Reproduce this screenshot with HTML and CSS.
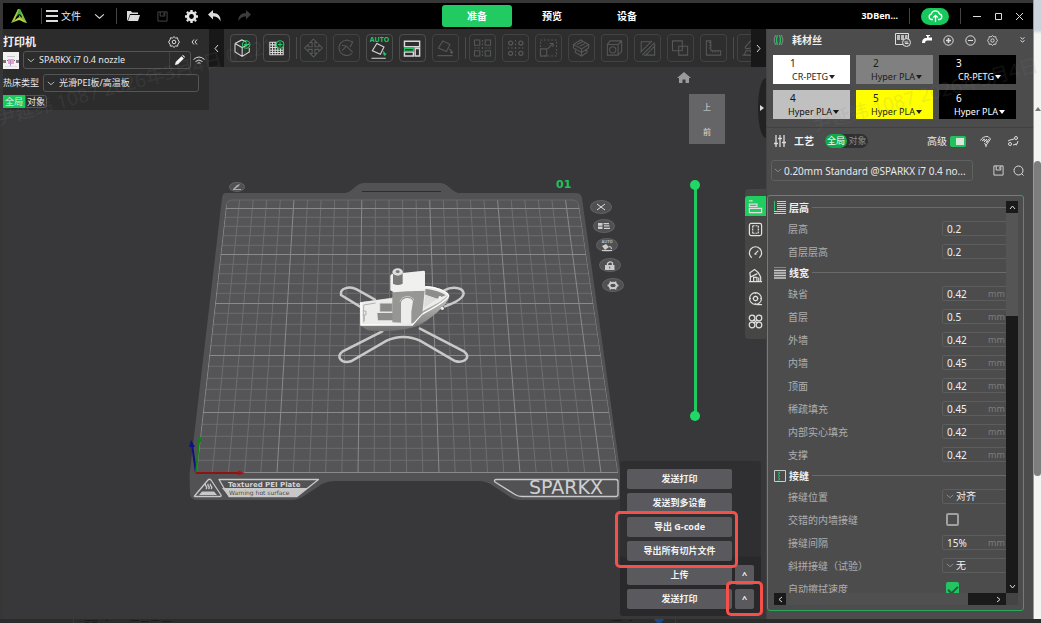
FILE: index.html
```html
<!DOCTYPE html>
<html lang="zh-CN">
<head>
<meta charset="utf-8">
<title>3DBenchy</title>
<link rel="stylesheet" href="styles.css">
</head>
<body>
<svg class="defs" width="0" height="0" aria-hidden="true">
  <symbol id="i-gear" viewBox="0 0 12 12"><path d="M6 .6 7.500 2l2-.2.500 2L11.400 6 10 8.200l-.5 2-2-.2L6 11.400 4.500 10l-2 .2-.5-2L.6 6 2 3.800l.5-2 2 .2z"/><circle cx="6" cy="6" r="1.800"/></symbol>
  <symbol id="i-chev" viewBox="0 0 10 6"><path d="M1 1l4 3.500L9 1"/></symbol>
  <symbol id="i-save" viewBox="0 0 12 12"><path d="M1 1h10v10H1zM3.500 1v4.500h5V1M7 2.500v1.500"/></symbol>
</svg>
<div class="desktop">
<div class="window">
  <header class="titlebar">
    <div class="title-left">
      <svg class="logo" viewBox="0 0 16 15"><path fill="#3fae49" d="M7 0h2l4 8-5-3-5 5z"/><path fill="#a4c93a" d="M0 14 7 0h1L4 11l4-3z"/><path fill="#7fbf3d" d="M9 0l7 14-4-1-4-5V6l3 3z"/><path fill="#c3d63c" d="M0 14l8-6 8 6-8-3z"/></svg>
      <i class="sep"></i>
      <button class="file-menu"><svg width="13" height="12" viewBox="0 0 13 12" class="ln"><path d="M0 1h12M0 6h12M0 11h12"/></svg>文件</button>
      <button class="chev-btn" aria-label="更多"><svg width="11" height="7" class="ln"><use href="#i-chev"/></svg></button>
      <i class="sep sep-b"></i>
      <button class="tb open" aria-label="打开"><svg width="13" height="12" viewBox="0 0 13 12"><path fill="#dcdcdc" d="M0 11V1h4l1 1.500h6V4H3L1 9.500zM3.200 5H13l-2 6H1z"/></svg></button>
      <button class="tb save dim" aria-label="保存"><svg width="11" height="11" class="ln"><use href="#i-save"/></svg></button>
      <button class="tb prefs" aria-label="设置"><svg width="13" height="13" viewBox="0 0 13 13"><circle cx="6.500" cy="6.500" r="3.700" fill="none" stroke="#e6e6e6" stroke-width="2.600"/><path stroke="#e6e6e6" stroke-width="2.400" d="M6.500 0v2M6.500 11v2M0 6.500h2M11 6.500h2M1.900 1.900l1.300 1.300M9.800 9.800l1.300 1.300M1.900 11.100l1.300-1.300M9.800 3.200l1.300-1.300"/></svg></button>
      <button class="tb undo" aria-label="撤销"><svg width="13" height="12" viewBox="0 0 13 12"><path fill="#dcdcdc" d="M0 4.500 5 0v3c5 0 8 3 7.500 8.500C11 8 9 6.500 5 6.500v3z"/></svg></button>
      <button class="tb redo" aria-label="重做"><svg width="13" height="12" viewBox="0 0 13 12"><path fill="#3c3c3c" d="M13 4.500 8 0v3C3 3 0 6 .5 11.500 2 8 4 6.500 8 6.500v3z"/></svg></button>
    </div>
    <nav class="tabs"><button class="tab on">准备</button><button class="tab">预览</button><button class="tab">设备</button></nav>
    <div class="title-right">
      <span class="project">3DBen...</span><i class="sep"></i>
      <button class="cloud" aria-label="上传"><svg width="15" height="12" viewBox="0 0 15 12" fill="none" stroke="#fff" stroke-width="1.300"><path d="M5 9.500H3.500a2.700 2.700 0 0 1-.3-5.300A4.300 4.300 0 0 1 11.500 4a2.800 2.800 0 0 1 0 5.500H10M7.500 12V5.500M5.300 7.500l2.200-2.200 2.200 2.200"/></svg></button>
      <i class="sep"></i>
      <button class="wb" aria-label="最小化"><svg width="9" height="9" class="ln"><path d="M0 4.500h8"/></svg></button>
      <button class="wb" aria-label="最大化"><svg width="9" height="9" class="ln"><path d="M1.500 1.500h6v6h-6z"/></svg></button>
      <button class="wb" aria-label="关闭"><svg width="9" height="9" class="ln"><path d="M1 1l7 7M8 1L1 8"/></svg></button>
    </div>
  </header>

  <div class="body">
    <main class="viewport">
      <svg class="scene" viewBox="3 29 763 590" preserveAspectRatio="xMinYMin slice" aria-hidden="true">
        <defs>
          <clipPath id="bed"><path d="M232 200H573Q578 200 579 206L618 473H196L226 206Q227 200 232 200z"/></clipPath>
          <linearGradient id="hull" x1="0" y1="0" x2="0" y2="1"><stop offset=".3" stop-color="#bdbdbb"/><stop offset=".75" stop-color="#8f8f8d"/><stop offset="1" stop-color="#6d6d6b"/></linearGradient>
        </defs>
        <path fill="#525255" d="M226 193H346Q350 192 354 188 359 183 364 183H440Q445 183 450 188 454 192 458 193H576Q581 193 582 198L621.500 480V494Q621 500 615 500H519Q514 500 510 497L492 485Q486 481 478 481H336Q328 481 322 484L304 496Q298 500 292 500H197Q190 500 190 493L189.500 475 222 198Q222.500 193 226 193z"/>
        <path stroke="#2d2d2f" d="M362 191.500H441"/>
        <path fill="#555558" d="M232 200H573Q578 200 579 206L618 473H196L226 206Q227 200 232 200z"/>
        <g clip-path="url(#bed)" fill="none">
          <path stroke="#6f6f72" d="M239.600 200L212.200 473M253.200 200L228.400 473M266.700 200L244.600 473M280.300 200L260.800 473M307.500 200L293.200 473M321.100 200L309.400 473M334.600 200L325.600 473M348.200 200L341.800 473M375.400 200L374.200 473M389 200L390.400 473M402.500 200L406.600 473M416.100 200L422.800 473M443.300 200L455.200 473M456.900 200L471.400 473M470.400 200L487.600 473M484 200L503.800 473M511.200 200L536.200 473M524.800 200L552.400 473M538.300 200L568.600 473M551.900 200L584.800 473"/>
          <path stroke="#6c6c6f" d="M190 217.300H620M190 226.300H620M190 235.700H620M190 245.300H620M190 264.300H620M190 273.700H620M190 283.700H620M190 293.300H620M190 313.300H620M190 324.300H620M190 334.300H620M190 345.700H620M190 366.300H620M190 378.300H620M190 389.300H620M190 400.300H620M190 424.300H620M190 436.300H620M190 448.300H620M190 460.300H620"/>
          <path stroke="#8a8a8c" d="M293.900 200L277 473M361.800 200L358 473M429.700 200L439 473M497.600 200L520 473M565.500 200L601 473M190 208.500H620M190 254.500H620M190 303.500H620M190 355.500H620M190 412.500H620M190 472.500H620M226.500 204L196.500 473M579 206L618 473"/>
        </g>
        <path fill="none" stroke="#68686b" d="M226 206Q227 200 232 200H573Q578 200 579 206"/>
        <g transform="translate(325 255) scale(.3333)">
          <g fill="none" stroke="#c9c9c8" stroke-width="7.500" stroke-linecap="round">
            <path d="M172 229L52 290C32 304 48 327 78 319L185 257C215 242 255 242 285 257L390 318C418 327 440 306 418 290L285 221M150 134L95 103C75 93 44 98 48 120L110 158M358 106C380 94 414 96 416 115 416 130 385 145 360 154"/>
          </g>
          <path fill="url(#hull)" d="M105 142L200 128 300 93C330 94 368 106 373 122 372 142 335 178 292 205 262 226 180 233 128 226L107 212z"/>
          <path fill="#ececeb" d="M105 142L200 130 300 94C330 96 362 106 369 121L345 140 290 170 262 208 107 211z"/>
          <path fill="#8d8d8b" d="M301 102C325 104 352 112 362 121L336 131 301 119z"/>
          <path fill="#dededd" d="M301 119L336 131 296 160z"/>
          <path fill="none" stroke="#fff" stroke-width="4" d="M301 95C330 96 365 107 371 122 369 133 340 152 290 178L262 210H108V143"/>
          <path fill="none" stroke="#b2b2b0" stroke-width="3" d="M116 202V150L152 144M113 168h10v12h-10M118 180v18"/>
          <path fill="#898988" stroke="#c4c4c2" stroke-width="2" d="M165 145h37v25h-37z"/>
          <path fill="#8c8c8a" d="M157 174h48v22h-46z"/>
          <path fill="#969694" d="M202 110L299 107 292 175 264 205 202 202z"/>
          <path fill="#ededec" d="M228 203V143C232 125 260 125 264 139L259 170V206z"/>
          <path fill="none" stroke="#c6c6c4" stroke-width="3" d="M225 140C230 120 262 120 267 136"/>
          <path fill="#f0f0ee" d="M196 62Q197 58 202 57L296 47Q300 47 300 51V106L206 112 196 106z"/>
          <path fill="#787876" d="M204 52V86Q218 94 233 86V52z"/>
          <ellipse cx="218" cy="51" rx="16" ry="11" fill="#ddd"/><ellipse cx="218" cy="50" rx="6" ry="4" fill="#777"/>
          <circle cx="345" cy="127" r="4" fill="#eee"/><circle cx="352" cy="160" r="5" fill="#eee"/>
        </g>
        <g fill="none" stroke="#c8c8c8" stroke-width="1.300" stroke-linejoin="round">
          <path d="M194.500 496L208 480Q209.500 478.500 211 480L221 495Q221.500 496.500 220 496.500H195.500Q194 496.500 194.500 496z"/>
          <path d="M219 479.500H318.500L297 496.500H229z"/>
          <path d="M496 479.500H616Q618 479.500 618 482V494Q618 496.500 616 496.500H522Q518 496.500 515 494.500L495 482Q493.500 480 496 479.500z"/>
          <path d="M206 489q1.500-1.500 0-3t0-2M208.500 489q1.500-1.500 0-3t0-2M211 489q1.500-1.500 0-3t0-2"/>
        </g>
        <path fill="#c8c8c8" d="M202 491.500h12l3 3.500h-18zM222 488H308L297 496.500H229z"/>
        <text x="228" y="487" class="plate-name">Textured PEI Plate</text>
        <text x="229" y="495" class="plate-note">Warning hot surface</text>
        <text x="566" y="494" class="plate-brand">SPARKX</text>
        <text x="556" y="188" class="plate-no">01</text>
        <g stroke-width="2"><path stroke="#12127c" d="M196 473L192 444"/><path stroke="#118018" d="M196 473L199 440"/><path stroke="#8e1414" d="M196 473H240"/></g>
        <path fill="#12127c" d="M191 440l4 7h-6z"/><path fill="#118018" d="M200 435l2 7h-5z"/><path fill="#a01616" d="M245 473l-7-2.500v5z"/>
      </svg>

      <div class="toolbar">
        <button class="pg" aria-label="上一页"><svg width="5" height="9" class="ln"><path d="M4 1L1 4.500 4 8"/></svg></button>
        <div class="tools">
          <button class="tool" aria-label="添加模型"><svg viewBox="0 0 28 28"><path d="M4.500 9L12 5l5 2M4.500 9l8 4.500L20 9.500M4.500 9v9.500l8 5 8-5V14M12.500 13.500v10"/><g class="g"><circle cx="17" cy="10" r="4.200"/><path d="M14.500 10h5M17 7.500v5"/></g></svg></button>
          <button class="tool" aria-label="添加盘"><svg viewBox="0 0 28 28"><path d="M6.500 7.500h15v14h-15zM9.500 7v14M12.500 7v14M15.500 7v14M18.500 7v14M6.500 10.500h15M6.500 13.500h15M6.500 16.500h15M6.500 19h15"/><g class="g"><circle cx="18" cy="10" r="4.200" fill="#2e2f2e"/><path d="M15.500 10h5M18 7.500v5"/></g></svg></button>
          <i class="tsep"></i>
          <button class="tool off" aria-label="移动"><svg viewBox="0 0 28 28"><path d="M14 4l4 4h-2.500v4.500H20V10l4 4-4 4v-2.500h-4.500V20H18l-4 4-4-4h2.500v-4.500H8V18l-4-4 4-4v2.500h4.500V8H10z"/></svg></button>
          <button class="tool off" aria-label="旋转"><svg viewBox="0 0 28 28"><path d="M20 20A8.500 8.500 0 1 1 16 5.500M14 5l7 2-3 6M9 17l5-5 7 7M14 12l-5-1"/></svg></button>
          <button class="tool" aria-label="自动朝向"><b>AUTO</b><svg viewBox="0 0 28 28"><path d="M11 9l8 4-4 8-9-4zM5 25.500h16"/><path class="g" d="M18 18q2 1 2 4M18 20l2 2 1.500-2"/></svg></button>
          <button class="tool" aria-label="整理"><svg viewBox="0 0 28 28"><path stroke-width="1.600" d="M5 6.500h17v6H5zM5 18.500h10V23H5zM17 14.500h5V23h-5z"/><path class="g" d="M5 14.500h10v3H5z"/></svg></button>
          <button class="tool off" aria-label="放平"><svg viewBox="0 0 28 28"><path d="M11 6l8 4-4 8-9-4zM5 22.500h17M18 15q3 1 3 4M19 18l2 2 1.500-2"/></svg></button>
          <i class="tsep"></i>
          <button class="tool off" aria-label="拆分对象"><svg viewBox="0 0 28 28"><path d="M5 5h6v6H5zM17 5h6v6h-6zM5 17h6v6H5zM17 17h6v6h-6z"/><path stroke-dasharray="2 2" d="M14 5v19M5 14h19"/></svg></button>
          <button class="tool off" aria-label="拆分零件"><svg viewBox="0 0 28 28"><g stroke-width="1.400"><circle cx="8.500" cy="8.500" r="2.300"/><circle cx="20" cy="8.500" r="2.300"/><circle cx="8.500" cy="20" r="2.300"/><circle cx="20" cy="20" r="2.300"/></g><path stroke-dasharray="2 2" d="M14 5v19M5 14h19"/></svg></button>
          <button class="tool off" aria-label="缩放"><svg viewBox="0 0 28 28"><path d="M5 15h7v8H5zM13 15l6-6M15 9h4v4"/><path stroke-dasharray="2 2" d="M5 5h18v18H5z"/></svg></button>
          <button class="tool off" aria-label="分层"><svg viewBox="0 0 28 28"><path d="M5 10l8-5 9 5-8 5zM5 10v4l9 5 8-5v-4M7 16v3l7 4 6-4v-3M9 10l6-3M12 12l6-3M14 15v8"/></svg></button>
          <button class="tool off" aria-label="孔洞"><svg viewBox="0 0 28 28"><path d="M6 10h12v12H6zM6 10l3-4h13v12l-4 4M18 10l4-4"/><circle cx="12" cy="16" r="3.500"/></svg></button>
          <button class="tool off" aria-label="切割"><svg viewBox="0 0 28 28"><path d="M7 19V7h12M10 22h12V9M6 19L19 6M8 22L22 8M12 22L22 12"/></svg></button>
          <button class="tool off" aria-label="布尔运算"><svg viewBox="0 0 28 28"><path d="M5 6h11v11H5zM12 12h10v10H12z"/></svg></button>
          <button class="tool off" aria-label="测量"><svg viewBox="0 0 28 28"><path d="M6 6h5v11h11v5H6zM9 8h2M9 11h2M9 14h2M13 19v-2M16 19v-2M19 19v-2"/></svg></button>
          <i class="tsep"></i>
          <button class="tool off" aria-label="支撑"><svg viewBox="0 0 28 28"><path d="M5 22h16M7 22l2-5h5l2 5M8 13l6-7 5 3-4 5-6 1z"/></svg></button>
        </div>
        <button class="pg" aria-label="下一页"><svg width="5" height="9" class="ln"><path d="M1 1l3 3.500L1 8"/></svg></button>
      </div>

      <section class="printer">
        <div class="p-head"><h2>打印机</h2><button aria-label="打印机设置"><svg width="12" height="12" class="ln"><use href="#i-gear"/></svg></button><button aria-label="收起"><svg width="7" height="6" class="ln"><path d="M3 .5L1 3l2 2.500M6 .5L4 3l2 2.500"/></svg></button></div>
        <div class="p-row">
          <svg class="thumb" viewBox="0 0 16 17"><path fill="#f4f1f2" d="M0 0h16v17H0z"/><path fill="#c9c9cc" d="M4 4h8v1H4z"/><path fill="#77727c" d="M0 8h3v3H0zM13 8h3v3h-3zM4 8h2v1H4zM10 8h2v1h-2z"/><path fill="#ef9fc0" d="M5 7h6v5H5z"/><path fill="#b58ad8" d="M7 8h1v6H7z"/><path fill="#ddd" d="M2 14h12v1H2z"/></svg>
          <div class="combo"><svg class="cv ln"><use href="#i-chev"/></svg><select aria-label="打印机型号"><option>SPARKX i7 0.4 nozzle</option></select><button class="edit" aria-label="编辑"><svg width="10" height="10" viewBox="0 0 10 10"><path fill="#fff" d="M0 10l.7-3L6.500 1.200l2.300 2.300L3 9.300zM7.200.5l.8-.5L10 2l-.5.800z"/></svg></button></div>
          <button class="wifi" aria-label="网络"><svg width="12" height="9" viewBox="0 0 12 9" class="ln"><path d="M.5 3.500q5.500-5 11 0M2.500 5.500q3.500-3 7 0M4.500 7.300q1.500-1.200 3 0"/></svg></button>
        </div>
        <div class="p-row"><label for="bedtype">热床类型</label><div class="combo"><svg class="cv ln"><use href="#i-chev"/></svg><select id="bedtype"><option>光滑PEI板/高温板</option></select></div></div>
        <div class="scope"><button class="on">全局</button><button>对象</button></div>
      </section>

      <button class="home" aria-label="主视图"><svg width="14" height="11" viewBox="0 0 14 11"><path fill="#9a9a9b" d="M7 0l7 6h-2v5H8.500V7.500h-3V11H2V6H0z"/></svg></button>
      <div class="cube"><span>上</span><span>前</span></div>
      <button class="expander" aria-label="展开"><svg width="4" height="6"><path fill="#ddd" d="M0 0l4 3-4 3z"/></svg></button>
      <div class="layers"><i></i><i></i></div>

      <button class="pb rename" aria-label="重命名"><svg width="8" height="6" viewBox="0 0 8 6"><path fill="#aaa" d="M0 5l4-4 3-1-1 2-4 3h6v1H0z"/></svg></button>
      <button class="pb p1" aria-label="删除盘"><svg width="10" height="8" class="ln"><path d="M1 1l8 6M9 1L1 7"/></svg></button>
      <button class="pb p2" aria-label="排列盘"><svg width="12" height="8" viewBox="0 0 12 8"><path fill="#ccc" d="M0 1h4.500v2.700H0zM0 4.500h4.500V7H0zM5.500 1H11v1.300H5.500zM6 3.300h5.500v1.300H6zM6 5.700h6V7H6z"/></svg></button>
      <button class="pb p3" aria-label="自动朝向盘"><b>AUTO</b><svg width="12" height="7" viewBox="0 0 12 7"><path fill="#ccc" d="M1 2l4-2 3 3-4 3zM1 6h10v1H1zM8 2q3 0 3 3h-1q0-2-2-2z"/></svg></button>
      <button class="pb p4" aria-label="锁定盘"><svg width="10" height="9" viewBox="0 0 10 9"><path fill="#ccc" d="M0 4h9.500v5H0z"/><path fill="none" stroke="#ccc" stroke-width="1.300" d="M2.500 4V2.500Q5-.5 7.500 2v2"/><path fill="#555" d="M4.200 5.500h1v2h-1z"/></svg></button>
      <button class="pb p5" aria-label="盘设置"><svg width="12" height="9" viewBox="0 0 12 9"><ellipse cx="6" cy="4.500" rx="3.700" ry="2.800" fill="none" stroke="#ccc" stroke-width="2"/><path stroke="#ccc" stroke-width="1.500" d="M.5 4.500h2M9.500 4.500h2M3 .5l1 2M9 .5l-1 2M3 8.500l1-2M9 8.500l-1-2"/></svg></button>

      <nav class="side" aria-label="参数分类">
        <button class="on" aria-label="质量"><svg viewBox="0 0 16 16"><path d="M1.500 10h13v4.500h-13zM1.500 5.500h8V8h-8z"/><path d="M1 2h4"/></svg></button>
        <button aria-label="强度"><svg viewBox="0 0 16 16"><rect x="1.500" y="1.500" width="13" height="13" rx="2"/><path stroke-dasharray="2 1" d="M5 4v8M11 4v8M5 4h6M5 12h6"/></svg></button>
        <button aria-label="速度"><svg viewBox="0 0 16 16"><path d="M4 13.500A6.500 6.500 0 1 1 12 13.500M7 10l4-4M7 9l2 1"/></svg></button>
        <button aria-label="支撑"><svg viewBox="0 0 16 16"><path d="M1 14.500h14M2.500 14V9.500L2 5l5-3.500L11 5l2.500 4.500v5M3 9.500L10 6M6 14v-4h3.500v4M11.500 14v-4"/></svg></button>
        <button aria-label="多材料"><svg viewBox="0 0 16 16"><circle cx="8" cy="8" r="6.300"/><circle cx="8" cy="8" r="2.300"/><path stroke-dasharray="1 2" d="M8 2v4M8 10v4M2 8h4M10 8h4"/><path d="M9 14.500h6"/></svg></button>
        <button aria-label="其他"><svg viewBox="0 0 16 16"><circle cx="4.300" cy="4.300" r="3"/><circle cx="11.700" cy="4.300" r="3"/><circle cx="4.300" cy="11.700" r="3"/><circle cx="11.700" cy="11.700" r="3"/><path d="M6 6l4 4M10 6l-4 4"/></svg></button>
      </nav>

      <div class="actions">
        <div class="act"><button>发送打印</button></div>
        <div class="act"><button>发送到多设备</button></div>
        <div class="act"><button>导出 G-code</button></div>
        <div class="act"><button>导出所有切片文件</button></div>
        <div class="act"><button>上传</button><button class="up" aria-label="更多上传选项">^</button></div>
        <div class="act"><button>发送打印</button><button class="up" aria-label="更多打印选项">^</button></div>
        <i class="mark m1"></i><i class="mark m2"></i>
      </div>
    </main>

    <aside class="panel">
      <section class="filament">
        <div class="f-head">
          <svg width="11" height="12" viewBox="0 0 11 12" fill="none"><path stroke="#888" d="M2.500 1q-3 5 0 10M8.500 1q3 5 0 10"/><path stroke="#27c063" stroke-width="1.300" d="M4.500 1q-2 5 0 10M6.500 1q2 5 0 10"/></svg>
          <h2>耗材丝</h2>
          <button aria-label="同步"><svg width="16" height="14" viewBox="0 0 16 14"><path fill="none" stroke="#ddd" d="M.5.5h13v6M.5.5v11H8"/><path fill="#bbb" d="M2 2h3v5H2zM6 2h3v5H6zM10 2h2.500v4H10z"/><circle cx="11.500" cy="9.500" r="4" fill="#555" stroke="#ddd"/><path stroke="#ddd" d="M9.500 9h3.500M10 10.500h3.500"/></svg></button>
          <button aria-label="冲刷"><svg width="10" height="10" viewBox="0 0 10 10"><path fill="#fff" d="M4 0h4v1H6.700v1.500H10v3H5Q3 5.500 3 8H0Q0 4 3 3h2V1H4z"/></svg></button>
          <button aria-label="添加"><svg width="11" height="11" class="ln"><circle cx="5.500" cy="5.500" r="4.700"/><path stroke-width="1.600" d="M3 5.500h5M5.500 3v5"/></svg></button>
          <button aria-label="移除"><svg width="11" height="11" class="ln"><circle cx="5.500" cy="5.500" r="4.700"/><path d="M3 5.500h5"/></svg></button>
          <button aria-label="耗材设置"><svg width="11" height="11" class="ln"><use href="#i-gear"/></svg></button>
          <button aria-label="折叠"><svg width="5" height="6" class="ln"><path d="M.5.500L2.500 2l2-1.500M.5 3.500l2 1.500 2-1.500"/></svg></button>
        </div>
        <div class="slots">
          <button class="slot white"><span>1</span><em>CR-PETG<i></i></em></button>
          <button class="slot gray"><span>2</span><em>Hyper PLA<i></i></em></button>
          <button class="slot black"><span>3</span><em>CR-PETG<i></i></em></button>
          <button class="slot silver"><span>4</span><em>Hyper PLA<i></i></em></button>
          <button class="slot yellow"><span>5</span><em>Hyper PLA<i></i></em></button>
          <button class="slot black"><span>6</span><em>Hyper PLA<i></i></em></button>
        </div>
      </section>
      <section class="process">
        <div class="c-head">
          <svg width="12" height="12" viewBox="0 0 12 12" class="ln"><path stroke-width="1.300" d="M2 0v12M6 0v12M10 0v12M0 8.500h4M4 3.500h4M8 7.500h4"/></svg>
          <h2>工艺</h2>
          <div class="pill"><button class="on">全局</button><button>对象</button></div>
          <label for="adv">高级</label><input id="adv" class="toggle" type="checkbox" checked>
          <button aria-label="对比"><svg width="11" height="11" viewBox="0 0 11 11" class="ln"><path d="M.5 4.500Q3 0 8 .5L10.500 3 6 9.500 4.500 7M2 5l3-2M4 6l3-3M6 7l3-4M5 10h2M3 3l5 3"/></svg></button>
          <button class="link" aria-label="关联"><svg width="12" height="11" viewBox="0 0 12 11" class="ln"><circle cx="9" cy="2" r="1.500"/><circle cx="3" cy="8" r="1.500"/><path d="M1 5l2-1 4-1M11 5l-1 3-4 1M10 9l-2-1"/></svg></button>
        </div>
        <div class="preset">
          <div class="combo"><svg class="cv ln"><use href="#i-chev"/></svg><select aria-label="工艺预设"><option>0.20mm Standard @SPARKX i7 0.4 no...</option></select></div>
          <button aria-label="保存预设"><svg width="11" height="11" class="ln"><use href="#i-save"/></svg></button>
          <button aria-label="搜索"><svg width="12" height="12" class="ln"><circle cx="5.500" cy="5.500" r="4.500"/><path d="M8.500 8.500l2 2"/></svg></button>
        </div>
        <div class="frame">
          <div class="params">
            <h3><svg width="12" height="13" viewBox="0 0 12 13"><path stroke="#27c063" d="M.5 0v10"/><path stroke="#ccc" d="M3 .5h9M3 2.500h9M3 4.500h9M3 6.500h9M3 8.500h9M0 10.500h12M0 12.500h12"/></svg>层高</h3>
            <div class="row"><label for="a1">层高</label><div class="num"><input id="a1" value="0.2"></div></div>
            <div class="row"><label for="a2">首层层高</label><div class="num"><input id="a2" value="0.2"></div></div>
            <h3><svg width="12" height="12" viewBox="0 0 12 12"><path stroke="#27c063" d="M0 .5h12"/><path stroke="#ccc" stroke-width="1.400" d="M0 3.500h12M0 6h12M0 8.500h12M0 11h12"/></svg>线宽</h3>
            <div class="row"><label for="b1">缺省</label><div class="num"><input id="b1" value="0.42"><span>mm</span></div></div>
            <div class="row"><label for="b2">首层</label><div class="num"><input id="b2" value="0.5"><span>mm</span></div></div>
            <div class="row"><label for="b3">外墙</label><div class="num"><input id="b3" value="0.42"><span>mm</span></div></div>
            <div class="row"><label for="b4">内墙</label><div class="num"><input id="b4" value="0.45"><span>mm</span></div></div>
            <div class="row"><label for="b5">顶面</label><div class="num"><input id="b5" value="0.42"><span>mm</span></div></div>
            <div class="row"><label for="b6">稀疏填充</label><div class="num"><input id="b6" value="0.45"><span>mm</span></div></div>
            <div class="row"><label for="b7">内部实心填充</label><div class="num"><input id="b7" value="0.42"><span>mm</span></div></div>
            <div class="row"><label for="b8">支撑</label><div class="num"><input id="b8" value="0.42"><span>mm</span></div></div>
            <h3><svg width="12" height="12" viewBox="0 0 12 12" fill="none"><path stroke="#ccc" d="M.5.500h11v11H.5z"/><path stroke="#27c063" d="M4 2l2 1-2 1.500L6 6 4 7.500 6 9l-2 1.500"/></svg>接缝</h3>
            <div class="row"><label for="c1">接缝位置</label><div class="num"><svg class="cv ln"><use href="#i-chev"/></svg><select id="c1"><option>对齐</option></select></div></div>
            <div class="row"><label for="c2">交错的内墙接缝</label><input id="c2" class="tick" type="checkbox"></div>
            <div class="row"><label for="c3">接缝间隔</label><div class="num"><input id="c3" value="15%"><span>mm</span></div></div>
            <div class="row"><label for="c4">斜拼接缝（试验）</label><div class="num"><svg class="cv ln"><use href="#i-chev"/></svg><select id="c4"><option>无</option></select></div></div>
            <div class="row"><label for="c5">自动擦拭速度</label><input id="c5" class="tick" type="checkbox" checked></div>
          </div>
          <div class="vbar"><svg width="7" height="4" class="ln"><path d="M1 4l2.500-3L6 4"/></svg><i></i><svg width="7" height="5" class="ln"><path d="M1 1l2.500 3L6 1"/></svg></div>
          <div class="hbar"><svg width="4" height="7" class="ln"><path d="M4 1L1 3.500 4 6"/></svg><i></i><svg width="4" height="7" class="ln"><path d="M0 1l3 2.500L0 6"/></svg></div>
          <div class="corner"></div>
        </div>
      </section>
    </aside>
  </div>
</div>
<div class="outer-bar"><svg width="6" height="4"><path fill="#777" d="M3 0l3 4H0z"/></svg><i></i></div>
<div class="outer-foot"><svg width="700" height="4" viewBox="0 0 700 4"><path fill="#1d3a78" d="M73 0h1v4h-1zM675 0h1v4h-1z"/><path fill="#174a8c" d="M654 0h10q-2 4-5 4t-5-4z"/><path fill="#1c1c1c" d="M84 1h14v1H84zM85 3h4v1h-4zM92 3h5v1h-5zM106 1h2v1h-2zM130 1h9v1h-9zM141 2h8v1h-8zM151 1h8v1h-8zM162 2h9v1h-9zM612 1h10v1h-10zM630 1h2v1h-2z"/></svg></div>
<div class="wm wm-a" aria-hidden="true">尹延纬 1087 2026年3月4日 09:21</div>
<div class="wm wm-b" aria-hidden="true">尹延纬 1087 2026年3月4日</div>
</div>
</body>
</html>
```

FILE: styles.css
```css
* { box-sizing: border-box; }
html, body { margin: 0; height: 100%; }
body { background: #363636; color: #e8e8e8; font: 10px/14px "Noto Sans", "Noto Sans CJK SC", sans-serif; overflow: hidden; }
button, select, input { font: inherit; color: inherit; margin: 0; padding: 0; border: 0; background: none; appearance: none; border-radius: 0; min-width: 0; outline: 0; }
button { display: inline-flex; align-items: center; justify-content: center; }
h2, h3 { margin: 0; }
h2 { font-size: 11px; line-height: 16px; font-weight: 700; color: #f0f0f0; }
svg { flex: none; display: block; }
.defs { position: absolute; }
.ln { fill: none; stroke: #dcdcdc; stroke-width: 1; }

.desktop { position: relative; height: 100vh; overflow: hidden; display: grid; grid-template: minmax(0, 1fr) 4px / minmax(0, 1fr) 8px; }
.window { display: flex; flex-direction: column; min-height: 0; padding: 3px 0 0 3px; }
.outer-bar { display: flex; flex-direction: column; align-items: center; padding-top: 107px; background: linear-gradient(#cdd3dc 30px, #f4f4f2 34px); border-left: 1px solid #999; }
.outer-bar i { align-self: stretch; height: 315px; margin-top: 50px; background: #7d7d7d; border-radius: 4px; }
.outer-foot { grid-column: 1 / 3; background: #2b2b2b; }
.wm { position: absolute; font-size: 19px; line-height: 24px; white-space: nowrap; color: #808080; opacity: .12; transform: rotate(-15deg); transform-origin: 0 100%; pointer-events: none; }
.wm-a { left: 0; top: 106px; }
.wm-b { left: 816px; top: 112px; }

.titlebar { display: grid; grid-template-columns: 439px auto 1fr; align-items: center; height: 26px; flex: none; background: #000; }
.title-left, .title-right { display: flex; align-items: center; }
.title-left { padding-left: 8px; }
.logo { width: 16px; height: 15px; }
.sep { width: 1px; height: 16px; background: #444; margin-left: 14px; }
.file-menu { gap: 2px; margin-left: 4px; }
.file-menu svg { stroke-width: 2; }
.chev-btn { margin-left: 13px; }
.sep-b { margin-left: 11px; }
.open { margin-left: 10px; }
.save, .prefs, .redo { margin-left: 17px; }
.undo { margin-left: 10px; }
.dim .ln { stroke: #4a4a4a; }
.tabs { display: flex; gap: 5px; }
.tab { width: 70px; height: 22px; border-radius: 3px; font-weight: 700; color: #fff; }
.tab.on { background: #22cb62; }
.title-right { justify-content: flex-end; padding-right: 9px; gap: 11px; }
.title-right .sep { margin: 0; }
.project { font-size: 9px; font-weight: 700; color: #fff; }
.cloud { width: 28px; height: 17px; border-radius: 9px; background: #17c85c; }
.wb { width: 10px; }

.body { display: flex; flex: 1; min-height: 0; }
.viewport { position: relative; flex: 1; min-width: 0; overflow: hidden; background: #38383a; }
.scene { position: absolute; left: 0; top: 0; width: 100%; height: 100%; }
.plate-name { font: 700 7px "DejaVu Sans", sans-serif; fill: #d4d4d4; }
.plate-note { font: 6px "DejaVu Sans", sans-serif; fill: #4c4c4e; }
.plate-brand { font: 19px "DejaVu Sans", sans-serif; fill: #d0d0d0; text-anchor: middle; }
.plate-no { font: 700 11px "DejaVu Sans", sans-serif; fill: #22c05e; }

.toolbar { position: absolute; left: 206px; right: 0; top: 0; height: 38px; display: flex; background: #2d2e2d; }
.pg { width: 15px; background: #181818; flex: none; }
.tools { display: flex; flex: 1; min-width: 0; overflow: hidden; align-items: center; padding-left: 6px; }
.tool { position: relative; width: 27px; height: 28px; margin-right: 6px; border: 1px solid #4c4d4c; border-radius: 4px; flex: none; }
.tool svg { width: 25px; height: 26px; fill: none; stroke: #d8d8d8; stroke-width: 1.200; }
.tool.off svg { stroke: #565759; }
.tool.off { border-color: #424342; }
.tool svg .g { stroke: #22c765; }
.tool b { position: absolute; left: 0; right: 0; top: 1px; font-size: 7px; line-height: 8px; color: #22c765; text-align: center; }
.tsep { width: 1px; height: 22px; background: #4a4b4a; margin-right: 3px; flex: none; }

.printer { position: absolute; left: 0; top: 0; width: 206px; padding: 4px 0 2px; background: #2c2c2d; font-size: 9px; }
.p-head { display: flex; align-items: center; height: 17px; padding-right: 11px; gap: 11px; }
.p-head h2 { flex: 1; }
.p-row { display: flex; align-items: center; gap: 4px; padding-right: 10px; height: 18px; margin-top: 1px; }
.p-row + .p-row { margin-top: 5px; }
.p-row label { white-space: nowrap; }
.thumb { width: 16px; height: 17px; }
.combo { display: flex; align-items: center; flex: 1; min-width: 0; height: 18px; border: 1px solid #555556; border-radius: 3px; padding-left: 3px; gap: 4px; }
.cv { width: 8px; height: 5px; }
.combo select { flex: 1; width: 0; height: 16px; line-height: 16px; }
.edit { width: 21px; height: 16px; border-left: 1px solid #404041; }
.p-row .wifi { margin: 0 -7px 0 -3px; width: 14px; }
.scope { display: flex; margin-top: 3px; height: 13px; line-height: 12px; }
.scope button { width: 22px; border: 1px solid #555; border-radius: 0 3px 3px 0; }
.scope .on { background: #1cc75c; border-color: #1cc75c; border-radius: 0; }

.home { position: absolute; right: 75px; top: 43px; }
.cube { position: absolute; right: 41px; top: 65px; width: 36px; height: 50px; background: #656567; display: flex; flex-direction: column; align-items: center; justify-content: space-around; font-size: 8px; line-height: 12px; color: #ddd; }
.expander { position: absolute; right: 0; top: 49px; width: 8px; height: 60px; background: #222223; border-radius: 8px 0 0 8px / 30px 0 0 30px; }
.layers { position: absolute; right: 66px; top: 151px; width: 10px; height: 241px; display: flex; flex-direction: column; justify-content: space-between; background: linear-gradient(#1fc95f, #1fc95f) center / 3px 231px no-repeat; }
.layers i { height: 10px; border-radius: 50%; background: #1fd866; }

.pb { position: absolute; width: 22px; height: 14px; flex-direction: column; border-radius: 50%; background: #505052; border: 1px solid #616163; }
.pb b { font-size: 4px; line-height: 4px; color: #bbb; }
.rename { left: 226px; top: 153px; width: 16px; height: 10px; }
.p1 { left: 587px; top: 171px; }
.p2 { left: 590px; top: 190px; }
.p3 { left: 593px; top: 209px; }
.p4 { left: 596px; top: 229px; }
.p5 { left: 599px; top: 249px; }

.side { position: absolute; right: 0; top: 160px; width: 21px; padding: 5px 0 8px; display: flex; flex-direction: column; gap: 3px; background: #464745; border-radius: 4px 0 0 4px; }
.side button { height: 20px; }
.side .on { background: #1fce60; border-radius: 3px 0 0 0; margin-top: 2px; }
.side svg { width: 15px; height: 15px; fill: none; stroke: #e0e0e0; stroke-width: 1.300; }

.actions { position: absolute; right: 5px; bottom: 3px; width: 141px; padding: 8px 7px 7px; display: flex; flex-direction: column; gap: 4px; border-radius: 3px; background: linear-gradient(#2f2f31 95px, #29292b 96px); }
.act { display: flex; gap: 3px; }
.act button { width: 105px; height: 20px; border-radius: 2px; background: #5a5a5e; font-size: 9px; font-weight: 700; color: #f2f2f2; }
.act .up { width: 19px; }
.mark { position: absolute; border: 3px solid #f5504a; border-radius: 5px; }
.m1 { left: -5px; top: 50px; width: 123px; height: 57px; }
.m2 { right: -2px; bottom: 0; width: 37px; height: 35px; }

.panel { width: 267px; flex: none; display: flex; flex-direction: column; min-height: 0; background: #4c4c4d; border-left: 1px solid #444; }
.filament { padding: 0 17px 8px 6px; border-bottom: 1px solid #404041; }
.f-head { display: flex; align-items: center; height: 22px; margin-bottom: 4px; margin-right: -9px; }
.f-head h2, .c-head h2 { font-size: 10px; margin: 0 auto 0 8px; }
.f-head button { margin-left: 11px; }
.f-head button:last-child { margin-left: 22px; }
.slots { display: grid; grid-template-columns: repeat(3, 1fr); gap: 6px; }
.slot { height: 29px; flex-direction: column; align-items: stretch; text-align: left; line-height: 14px; }
.slot span { padding-left: 17px; }
.slot em { font-style: normal; font-size: 9px; text-align: center; padding-left: 4px; white-space: nowrap; }
.slot em i { display: inline-block; border: 3px solid transparent; border-top: 4px solid currentColor; border-bottom: 0; margin-left: 1px; vertical-align: 1px; }
.white { background: #fff; color: #222; }
.gray { background: #808080; color: #1c1c1c; }
.black { background: #000; color: #fff; }
.silver { background: #c0c0c0; color: #111; }
.yellow { background: #ff0; color: #222; }

.process { flex: 1; min-height: 0; display: flex; flex-direction: column; padding: 3px 9px 8px 0; }
.c-head { display: flex; align-items: center; height: 20px; padding: 0 5px 0 7px; }
.c-head h2 { margin: 0 11px 0 8px; }
.pill { display: flex; height: 14px; border-radius: 7px; background: #303031; margin-right: auto; font-size: 9px; line-height: 14px; color: #8a8a8a; }
.pill button { width: 21px; border-radius: 7px; }
.pill .on { width: 22px; background: #12a94b; color: #fff; }
.toggle { width: 16px; height: 11px; border-radius: 2px; margin: 0 14px 0 3px; background: linear-gradient(#d8e6dc, #d8e6dc) 6px 2px / 8px 7px no-repeat #1fc25d; }
.link { margin-left: 16px; }
.preset { display: flex; align-items: center; height: 21px; margin: 9px -1px 0 0; padding-left: 4px; }
.preset .combo { height: 21px; border-color: #606061; padding-left: 2px; gap: 2px; margin-right: 11px; }
.preset > button { margin-left: 9px; }
.preset .cv { stroke: #999; }
.frame { flex: 1; min-height: 0; margin-top: 14px; display: grid; grid-template: minmax(0, 1fr) 12px / minmax(0, 1fr) 12px; padding: 5px 5px 5px 6px; border: 1px solid #2aa75b; border-radius: 3px; }
.params { overflow: hidden; margin-top: -3px; }
.params h3 { display: flex; align-items: center; gap: 3px; height: 19px; font-size: 10px; color: #f0f0f0; white-space: nowrap; }
.params h3::after { content: ""; flex: 1; height: 1px; background: #6a6a6b; }
.row { display: grid; grid-template-columns: 154px 90px; align-items: center; height: 23px; padding-left: 14px; }
.row label { color: #aeaeae; }
.num { display: flex; align-items: center; height: 15px; border: 1px solid #5d5d5e; border-radius: 2px; padding-left: 4px; gap: 2px; }
.num input { width: 39px; height: 13px; color: #f0f0f0; }
.num select { height: 13px; line-height: 13px; width: 50px; color: #f0f0f0; }
.num span { font-size: 9px; color: #7c7c7d; white-space: nowrap; }
.num .cv { margin-left: -1px; stroke: #999; }
.tick { width: 13px; height: 13px; border: 2px solid #a0a0a0; border-radius: 2px; margin-left: 4px; }
.tick:checked { border: 0; background: #22c562; display: grid; place-items: center; }
.tick:checked::after { content: ""; width: 8px; height: 4px; border: solid #2a5a3a; border-width: 0 0 2px 2px; transform: rotate(-45deg); }
.vbar { display: flex; flex-direction: column; align-items: center; background: #1a1a1a; padding: 4px 0 4px; }
.vbar i { width: 12px; height: 103px; background: #555556; margin: 4px 0 auto; }
.hbar { display: flex; align-items: center; background: #1a1a1a; padding: 0 5px 0 4px; }
.hbar i { height: 12px; width: 182px; background: #505050; margin: 0 auto 0 4px; }
.corner { background: #444445; }
```
